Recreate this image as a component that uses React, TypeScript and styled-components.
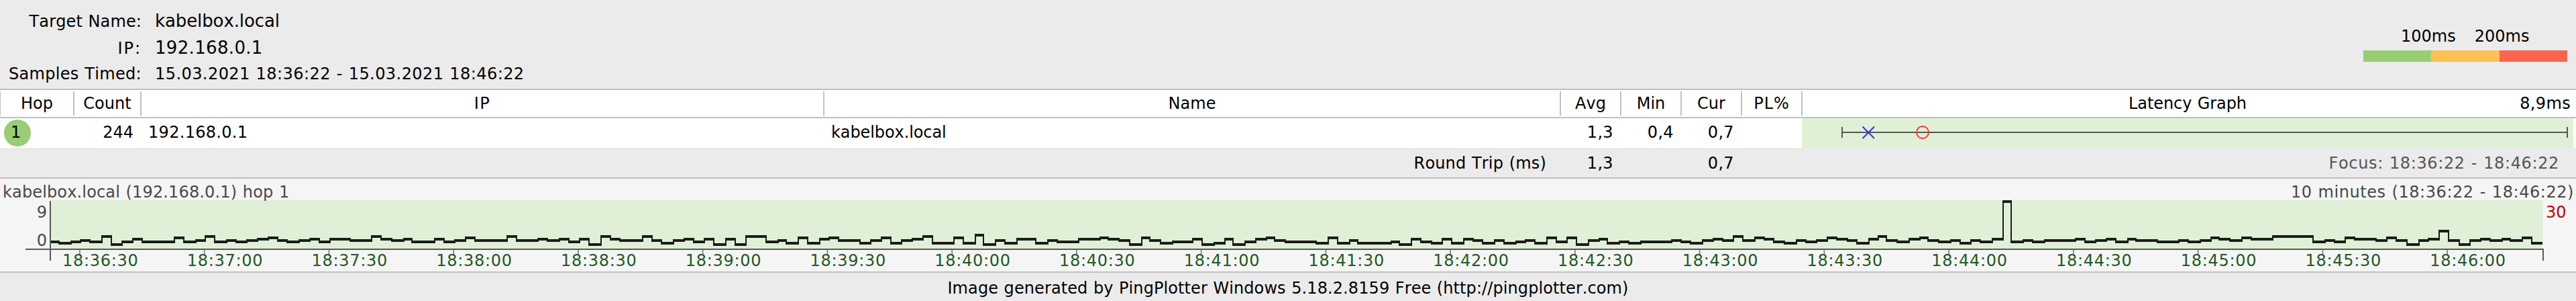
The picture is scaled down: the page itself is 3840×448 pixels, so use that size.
import React from "react";
import styled, { createGlobalStyle } from "styled-components";

// [x, level] - every entry starts a new step of the latency line
const samples: [number, number][] = [
	[76, 2], [87, 1], [105, 2], [119, 3], [133, 2], [151, 6], [165, 0], [181, 2],
	[197, 4], [211, 2], [259, 5], [273, 2], [291, 3], [305, 6], [319, 2], [337, 3],
	[351, 2], [367, 3], [383, 4], [399, 5], [413, 3], [427, 2], [445, 3], [461, 4],
	[475, 2], [491, 4], [521, 3], [553, 6], [567, 4], [583, 3], [601, 4], [613, 2],
	[647, 4], [661, 2], [677, 3], [693, 5], [707, 3], [755, 6], [769, 3], [801, 4],
	[815, 3], [833, 4], [847, 2], [863, 4], [877, 0], [895, 6], [909, 4], [923, 3],
	[957, 6], [971, 3], [985, 1], [1003, 3], [1019, 4], [1033, 2], [1049, 4], [1063, 0],
	[1081, 4], [1095, 0], [1111, 6], [1141, 2], [1159, 3], [1171, 1], [1189, 5], [1203, 1],
	[1221, 4], [1235, 5], [1249, 3], [1281, 1], [1297, 3], [1313, 5], [1327, 1], [1343, 3],
	[1359, 4], [1375, 6], [1389, 1], [1421, 5], [1435, 1], [1453, 7], [1465, 0], [1483, 3],
	[1497, 1], [1515, 4], [1543, 1], [1561, 3], [1575, 2], [1607, 4], [1639, 5], [1651, 4],
	[1667, 3], [1683, 0], [1701, 5], [1713, 3], [1729, 1], [1747, 2], [1777, 4], [1791, 0],
	[1809, 1], [1825, 4], [1837, 0], [1855, 2], [1871, 4], [1887, 5], [1899, 3], [1915, 2],
	[1961, 1], [1979, 5], [1993, 1], [2011, 3], [2023, 1], [2073, 2], [2085, 0], [2103, 4],
	[2117, 2], [2133, 1], [2149, 4], [2163, 1], [2181, 4], [2195, 3], [2209, 1], [2227, 3],
	[2241, 1], [2259, 2], [2273, 3], [2287, 1], [2305, 5], [2319, 2], [2335, 5], [2349, 0],
	[2367, 3], [2383, 4], [2395, 1], [2413, 2], [2427, 1], [2445, 2], [2491, 3], [2505, 2],
	[2519, 1], [2537, 3], [2553, 4], [2567, 3], [2583, 6], [2597, 3], [2615, 5], [2629, 4],
	[2643, 2], [2659, 1], [2677, 3], [2691, 2], [2707, 3], [2723, 5], [2737, 4], [2753, 3],
	[2767, 1], [2785, 4], [2799, 6], [2811, 3], [2827, 2], [2845, 4], [2861, 5], [2873, 3],
	[2889, 2], [2907, 3], [2921, 1], [2937, 3], [2951, 2], [2969, 4], [2985, 32], [2997, 2],
	[3015, 3], [3029, 2], [3047, 3], [3093, 4], [3107, 2], [3123, 3], [3139, 4], [3153, 2],
	[3171, 4], [3183, 3], [3215, 2], [3247, 3], [3261, 2], [3279, 3], [3295, 5], [3307, 4],
	[3323, 3], [3341, 5], [3355, 4], [3387, 6], [3447, 2], [3465, 3], [3479, 2], [3495, 5],
	[3509, 4], [3541, 3], [3557, 5], [3571, 3], [3587, 0], [3605, 3], [3619, 4], [3635, 10],
	[3649, 3], [3665, 0], [3681, 3], [3697, 4], [3711, 3], [3729, 4], [3741, 3], [3759, 5],
	[3773, 1],
];

const times = [
	"18:36:30", "18:37:00", "18:37:30", "18:38:00", "18:38:30", "18:39:00", "18:39:30",
	"18:40:00", "18:40:30", "18:41:00", "18:41:30", "18:42:00", "18:42:30", "18:43:00",
	"18:43:30", "18:44:00", "18:44:30", "18:45:00", "18:45:30", "18:46:00",
];

const PLOT_END = 3790;
const TICK_STEP = 185.75;

const levelY = (level: number) => 364 - level * 2;

// horizontal strokes are 4px thick, vertical ones 2px
const linePath = samples
	.map(([x, level], i) => {
		const next = samples[i + 1];
		const y = levelY(level);
		const end = next ? next[0] + 2 : PLOT_END;
		let d = `M${x} ${y - 2}H${end}V${y + 2}H${x}Z`;
		if (next) {
			const nextY = levelY(next[1]);
			const top = Math.min(y, nextY) - 2;
			const bottom = Math.max(y, nextY) + 2;
			d += `M${next[0]} ${top}H${end}V${bottom}H${next[0]}Z`;
		}
		return d;
	})
	.join("");

export default function App() {
	return (
		<Page>
			<GlobalStyle />
			<Header>
				<Info>
					<InfoLabel $track={0.005}>Target Name:</InfoLabel>
					<InfoValue $large $track={-0.004}>kabelbox.local</InfoValue>
					<InfoLabel $track={0.08}>IP:</InfoLabel>
					<InfoValue $large $track={0.0125}>192.168.0.1</InfoValue>
					<InfoLabel $track={0.013}>Samples Timed:</InfoLabel>
					<InfoValue $track={0.018}>15.03.2021 18:36:22 - 15.03.2021 18:46:22</InfoValue>
				</Info>
				<Legend>
					<LegendLabels>
						<span>100ms</span>
						<span>200ms</span>
					</LegendLabels>
					<LegendBar>
						<LegendPart $color="#97cd74" />
						<LegendPart $color="#ffc153" />
						<LegendPart $color="#fc644f" />
					</LegendBar>
				</Legend>
			</Header>

			<HeadRow>
				<HeadCell $first>Hop</HeadCell>
				<HeadCell>Count</HeadCell>
				<HeadCell $track={0.06}>IP</HeadCell>
				<HeadCell>Name</HeadCell>
				<HeadCell>Avg</HeadCell>
				<HeadCell>Min</HeadCell>
				<HeadCell>Cur</HeadCell>
				<HeadCell $track={0.04}>PL%</HeadCell>
				<GraphHead>
					<GraphTitle>Latency Graph</GraphTitle>
					<GraphMax>8,9ms</GraphMax>
				</GraphHead>
			</HeadRow>

			<Row>
				<HopCell>
					<HopBadge>1</HopBadge>
				</HopCell>
				<Cell $align="right">244</Cell>
				<Cell $track={0.0125}>192.168.0.1</Cell>
				<Cell $track={-0.004}>kabelbox.local</Cell>
				<Cell $align="right" $track={0.015}>1,3</Cell>
				<Cell $align="right" $track={0.015}>0,4</Cell>
				<Cell $align="right" $track={0.015}>0,7</Cell>
				<Cell />
				<GraphCell viewBox="2686 176 1150 44">
					<path d="M2745 189h2v16h-2zM3826 189h2v16h-2zM2745 196h1082v2h-1082z" fill="#53584f" />
					<path d="M2776.5 188.5L2794 206M2794 188.5L2776.5 206" stroke="#2f2ff5" strokeWidth="2" />
					<circle cx="2866" cy="197" r="9" fill="none" stroke="#fa322f" strokeWidth="1.8" />
				</GraphCell>
			</Row>

			<SummaryRow>
				<RoundTrip>Round Trip (ms)</RoundTrip>
				<Cell $align="right" $track={0.015}>1,3</Cell>
				<Cell />
				<Cell $align="right" $track={0.015}>0,7</Cell>
				<Cell />
				<Focus>Focus: 18:36:22 - 18:46:22</Focus>
			</SummaryRow>

			<Timeline>
				<TimelineHead>
					<Caption $track={0.006}>kabelbox.local (192.168.0.1) hop 1</Caption>
					<Caption $track={0.023}>10 minutes (18:36:22 - 18:46:22)</Caption>
				</TimelineHead>
				<PlotRow>
					<Scale>
						<span>9</span>
						<span>0</span>
					</Scale>
					<Plot viewBox="76 298 3714 72">
						<path d="M76 298h3714v72h-3714z" fill="#dff0d6" />
						<path d={linePath} fill="#1b1c1a" />
						{times.map((time, i) => (
							<rect
								key={time}
								x={118 + i * TICK_STEP}
								y="372"
								width="1.8"
								height="8"
								fill="#858585"
							/>
						))}
						<path d="M74 299h2v89h-2zM38 370h3754v2H38zM3790 370h2v18h-2z" fill="#595959" />
					</Plot>
					<LossScale>30</LossScale>
				</PlotRow>
				<Times>
					{times.map((time) => (
						<Time key={time}>{time}</Time>
					))}
				</Times>
			</Timeline>

			<Footer>Image generated by PingPlotter Windows 5.18.2.8159 Free (http://pingplotter.com)</Footer>
		</Page>
	);
}

const GlobalStyle = createGlobalStyle`
	body {
		margin: 0;
		background-color: #ebebeb;
	}
`;

const Page = styled.div`
	width: 3840px;
	height: 448px;
	display: flex;
	flex-direction: column;
	overflow: hidden;
	background-color: #ebebeb;
	color: #000;
	font-family: "DejaVu Sans", sans-serif;
	font-size: 24px;
	font-kerning: none;
	font-variant-ligatures: none;
	word-spacing: 0.034em;
	white-space: nowrap;
`;

const Header = styled.div`
	height: 132px;
	display: flex;
	justify-content: space-between;
`;

const Info = styled.div`
	display: grid;
	grid-template-columns: 211px auto;
	grid-template-rows: 40px 39px 42px;
	column-gap: 20px;
	padding-top: 11px;
	line-height: 40px;
	align-items: baseline;
`;

const InfoLabel = styled.span<{ $track?: number }>`
	text-align: right;
	letter-spacing: ${(props) => props.$track || 0}em;
`;

const InfoValue = styled.span<{ $large?: boolean; $track?: number }>`
	font-size: ${(props) => (props.$large ? 26 : 24)}px;
	letter-spacing: ${(props) => props.$track || 0}em;
`;

const Legend = styled.div`
	width: 304px;
	margin: 34px 13px 0 0;
`;

const LegendLabels = styled.div`
	display: flex;
	gap: 28px;
	height: 41px;
	padding-left: 56px;
	line-height: 40px;
`;

const LegendBar = styled.div`
	display: flex;
	height: 17px;
`;

const LegendPart = styled.div<{ $color: string }>`
	flex: 1;
	background-color: ${(props) => props.$color};
`;

const Columns = styled.div`
	display: grid;
	grid-template-columns: 111px 100px 1018px 1098px 90px 90px 90px 90px 1153px;
`;

const HeadRow = styled(Columns)`
	height: 44px;
	box-sizing: border-box;
	padding: 2px 0;
	border-top: 2px solid #c0c0c0;
	border-bottom: 2px solid #c0c0c0;
	background-color: #fff;
	line-height: 36px;
`;

const HeadCell = styled.div<{ $first?: boolean; $track?: number }>`
	border-right: 2px solid #c0c0c0;
	border-left: ${(props) => (props.$first ? "1px solid #c0c0c0" : "none")};
	text-align: center;
	letter-spacing: ${(props) => props.$track || 0}em;
`;

const GraphHead = styled.div`
	display: grid;
	grid-template-columns: 1fr auto 1fr;
	padding: 0 8px 0 3px;
`;

const GraphTitle = styled.span`
	grid-column: 2;
	letter-spacing: -0.003em;
`;

const GraphMax = styled.span`
	text-align: right;
	letter-spacing: 0.015em;
`;

const Row = styled(Columns)`
	height: 44px;
	background-color: #fff;
	line-height: 42px;
`;

const Cell = styled.div<{ $align?: string; $track?: number }>`
	padding: 0 12px 0 10px;
	text-align: ${(props) => props.$align || "left"};
	letter-spacing: ${(props) => props.$track || 0}em;
`;

const HopCell = styled.div`
	padding: 2px 0 0 6px;
`;

const HopBadge = styled.div`
	width: 40px;
	height: 40px;
	box-sizing: border-box;
	padding-left: 10px;
	border-radius: 50%;
	background-color: #97cd74;
	line-height: 38px;
`;

const GraphCell = styled.svg`
	width: 1150px;
	height: 44px;
	margin-left: -1px;
	background-color: #dff0d6;
`;

const SummaryRow = styled(Columns)`
	height: 44px;
	line-height: 46px;
`;

const RoundTrip = styled.div`
	grid-column: 1 / 5;
	padding-right: 22px;
	text-align: right;
	letter-spacing: 0.007em;
`;

const Focus = styled.div`
	padding-right: 25px;
	color: #555;
	text-align: right;
	letter-spacing: 0.0262em;
`;

const Timeline = styled.div`
	height: 142px;
	box-sizing: border-box;
	border-top: 2px solid #c0c0c0;
	border-bottom: 2px solid #c0c0c0;
	background-color: #f5f5f5;
`;

const TimelineHead = styled.div`
	position: relative;
	z-index: 1;
	height: 32px;
	display: flex;
	justify-content: space-between;
	padding: 0 3px 0 4px;
	line-height: 40px;
`;

const Caption = styled.span<{ $track: number }>`
	color: #484848;
	letter-spacing: ${(props) => props.$track}em;
`;

const PlotRow = styled.div`
	height: 72px;
	display: grid;
	grid-template-columns: 76px 3714px 50px;
`;

const Scale = styled.div`
	display: flex;
	flex-direction: column;
	gap: 2px;
	padding-right: 6px;
	color: #484848;
	line-height: 40px;
	text-align: right;
	margin-top: -2px;
`;

const Plot = styled.svg`
	width: 3714px;
	height: 72px;
	overflow: visible;
`;

const LossScale = styled.div`
	padding-left: 5px;
	margin-top: -2px;
	color: #c80000;
	line-height: 40px;
`;

const Times = styled.div`
	position: relative;
	display: flex;
	padding: 2px 0 0 93px;
	line-height: 32px;
	color: #1f5a1f;
	letter-spacing: 0.029em;
`;

const Time = styled.span`
	flex: 0 0 185.75px;
`;

const Footer = styled.div`
	height: 42px;
	line-height: 46px;
	text-align: center;
	letter-spacing: 0.0037em;
`;
